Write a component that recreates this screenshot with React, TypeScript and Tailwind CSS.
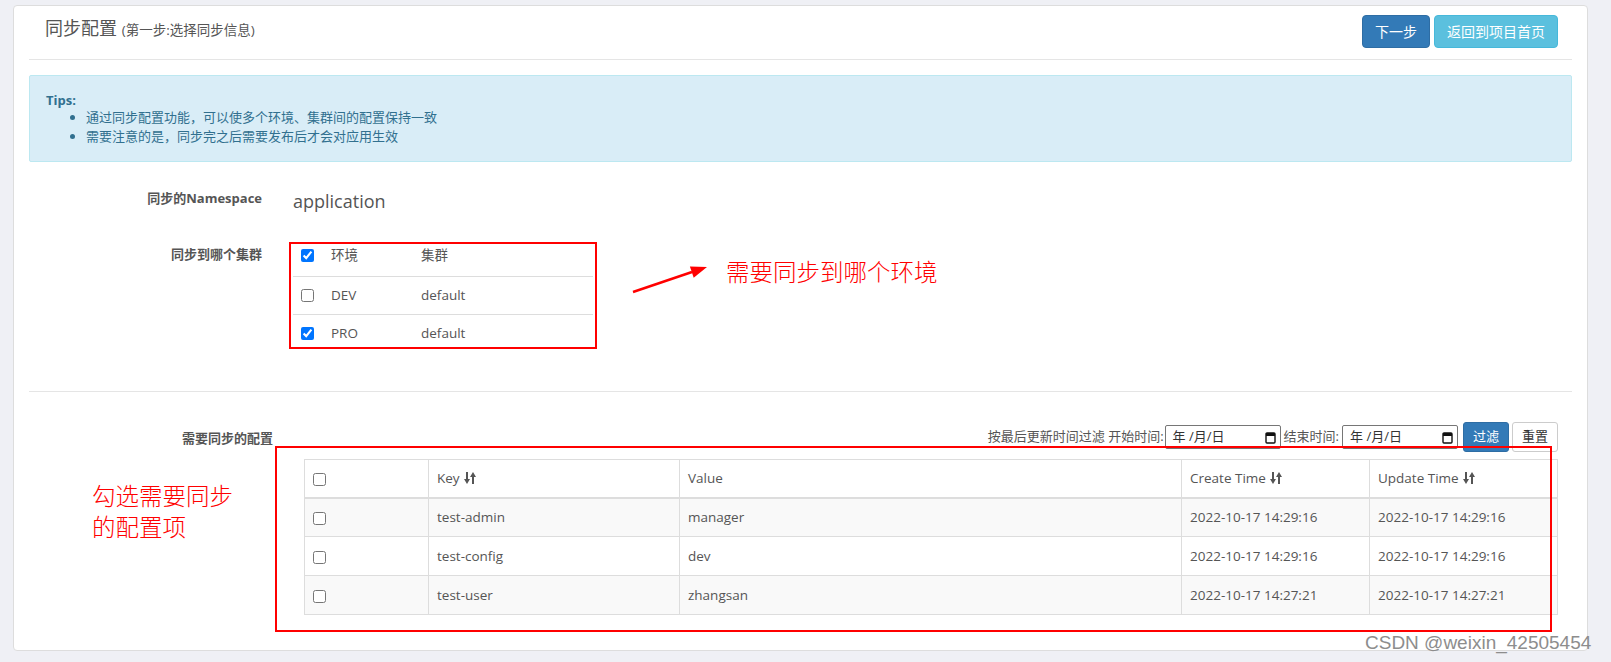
import React from 'react';

const SortIcon = () => (
  <svg width="12" height="14" viewBox="0 0 12 14" className="ml-[4px] inline-block align-[-2px]">
    <rect x="2" y="1" width="2" height="8" fill="#555" />
    <polygon points="0,8 6,8 3,13" fill="#555" />
    <rect x="8" y="5" width="2" height="8" fill="#555" />
    <polygon points="6,6 12,6 9,1" fill="#555" />
  </svg>
);

const CalendarIcon = () => (
  <svg width="11" height="13" viewBox="0 0 11 13">
    <rect x="1" y="2" width="9" height="10" rx="1" fill="none" stroke="#111" strokeWidth="1.4" />
    <rect x="1" y="2" width="9" height="3" fill="#111" />
  </svg>
);

const DateBox = () => (
  <div className="flex h-[24px] w-[116px] items-center justify-between rounded-[2px] border border-[#767676] bg-white pl-[7px] pr-[4px] text-[13px] text-[#333]">
    <span>年 /月/日</span>
    <CalendarIcon />
  </div>
);

const clusters = [
  { env: 'DEV', name: 'default', checked: false },
  { env: 'PRO', name: 'default', checked: true },
];

const items = [
  { key: 'test-admin', value: 'manager', created: '2022-10-17 14:29:16', updated: '2022-10-17 14:29:16' },
  { key: 'test-config', value: 'dev', created: '2022-10-17 14:29:16', updated: '2022-10-17 14:29:16' },
  { key: 'test-user', value: 'zhangsan', created: '2022-10-17 14:27:21', updated: '2022-10-17 14:27:21' },
];

export default function App() {
  return (
    <div className="relative h-[662px] w-full overflow-hidden bg-[#eff0f5] pt-[5px] pl-[13px] pr-[23px] font-['Open_Sans','Noto_Sans_CJK_SC',sans-serif] text-[#555]">
      <div className="rounded-[4px] border border-[#ddd] bg-white px-[15px] pb-[35px]">
        {/* heading */}
        <div className="flex items-center justify-between border-b border-[#e5e5e5] pt-[9px] pb-[11px] pl-[16px] pr-[14px]">
          <h3 className="mb-[6px] text-[18px] leading-[24px] text-[#555]">
            同步配置 <small className="text-[13.5px]">(第一步:选择同步信息)</small>
          </h3>
          <div className="flex gap-[4px]">
            <button className="h-[33px] rounded-[4px] border border-[#2e6da4] bg-[#337ab7] px-[12px] text-[14px] text-white">
              下一步
            </button>
            <button className="h-[33px] rounded-[4px] border border-[#46b8da] bg-[#5bc0de] px-[12px] text-[14px] text-white">
              返回到项目首页
            </button>
          </div>
        </div>

        {/* tips */}
        <div className="mt-[15px] rounded-[2px] border border-[#bce8f1] bg-[#d9edf7] pt-[16px] pb-[15px] pl-[16px] text-[13px] text-[#31708f]">
          <strong className="block leading-[16px]">Tips:</strong>
          <ul className="list-disc pl-[40px] leading-[19px]">
            <li>通过同步配置功能，可以使多个环境、集群间的配置保持一致</li>
            <li>需要注意的是，同步完之后需要发布后才会对应用生效</li>
          </ul>
        </div>

        {/* namespace */}
        <div className="mt-[26px] flex items-start">
          <div className="w-[233px] text-right text-[13px] font-bold leading-[20px]">同步的Namespace</div>
          <div className="ml-[31px] text-[18px] leading-[26px]">application</div>
        </div>

        {/* clusters */}
        <div className="mt-[28px] flex items-start">
          <div className="mt-[2px] w-[233px] text-right text-[13px] font-bold leading-[20px]">同步到哪个集群</div>
          <div className="ml-[27px] w-[308px] border-2 border-[#f00] px-[2px] text-[13.5px] leading-[20px]">
            <div className="flex h-[32px] items-start pt-[1px]">
              <div className="flex h-[20px] w-[38px] items-center pl-[8px]">
                <input type="checkbox" defaultChecked className="h-[13px] w-[13px]" />
              </div>
              <div className="w-[90px]">环境</div>
              <div>集群</div>
            </div>
            {clusters.map((c, i) => (
              <div
                key={c.env}
                className={`flex items-start border-t border-[#ddd] pt-[8px] ${i === 0 ? 'h-[38px]' : 'h-[33px]'}`}
              >
                <div className="flex h-[20px] w-[38px] items-center pl-[8px]">
                  <input type="checkbox" defaultChecked={c.checked} className="h-[13px] w-[13px]" />
                </div>
                <div className="w-[90px]">{c.env}</div>
                <div>{c.name}</div>
              </div>
            ))}
          </div>
          <svg width="84" height="35" viewBox="0 0 84 35" className="ml-[31px] mt-[20px]">
            <line x1="5" y1="30" x2="64" y2="10" stroke="#f00" strokeWidth="2.5" />
            <polygon points="79,5 65.7,15.8 61.9,4.4" fill="#f00" />
          </svg>
          <div className="ml-[14px] mt-[14px] font-['Noto_Sans_CJK_SC',sans-serif] text-[23.5px] font-light leading-[30px] text-[#f00]">
            需要同步到哪个环境
          </div>
        </div>

        {/* items */}
        <div className="relative mt-[42px] flex items-start border-t border-[#e5e5e5] pt-[30px]">
          <div className="mt-[6px] w-[244px] text-right text-[13px] font-bold leading-[20px]">需要同步的配置</div>
          <div className="ml-[31px] flex-1 pr-[14px]">
            <div className="flex h-[30px] items-center justify-end text-[13px]">
              <span>按最后更新时间过滤 开始时间:</span>
              <div className="ml-[1px]">
                <DateBox />
              </div>
              <span className="ml-[3px]">结束时间:</span>
              <div className="ml-[3px]">
                <DateBox />
              </div>
              <button className="ml-[5px] h-[30px] w-[46px] rounded-[3px] border border-[#2e6da4] bg-[#337ab7] text-[13px] text-white">
                过滤
              </button>
              <button className="ml-[3px] h-[30px] w-[46px] rounded-[3px] border border-[#ccc] bg-white text-[13px] text-[#333]">
                重置
              </button>
            </div>
            <table className="mt-[7px] w-full table-fixed border-collapse border border-[#ddd] text-[13.5px]">
              <colgroup>
                <col className="w-[124px]" />
                <col className="w-[251px]" />
                <col className="w-[502px]" />
                <col className="w-[188px]" />
                <col className="w-[188px]" />
              </colgroup>
              <thead>
                <tr className="h-[38px] border-b-2 border-[#ddd]">
                  <th className="border-r border-[#ddd] px-[8px] text-left font-normal">
                    <input type="checkbox" className="h-[13px] w-[13px] align-middle" />
                  </th>
                  <th className="border-r border-[#ddd] px-[8px] text-left font-normal">
                    Key<SortIcon />
                  </th>
                  <th className="border-r border-[#ddd] px-[8px] text-left font-normal">Value</th>
                  <th className="border-r border-[#ddd] px-[8px] text-left font-normal">
                    Create Time<SortIcon />
                  </th>
                  <th className="px-[8px] text-left font-normal">
                    Update Time<SortIcon />
                  </th>
                </tr>
              </thead>
              <tbody>
                {items.map((it, i) => (
                  <tr key={it.key} className={`h-[39px] border-t border-[#ddd] ${i % 2 === 0 ? 'bg-[#f9f9f9]' : 'bg-white'}`}>
                    <td className="border-r border-[#ddd] px-[8px]">
                      <input type="checkbox" className="h-[13px] w-[13px] align-middle" />
                    </td>
                    <td className="border-r border-[#ddd] px-[8px]">{it.key}</td>
                    <td className="border-r border-[#ddd] px-[8px]">{it.value}</td>
                    <td className="border-r border-[#ddd] px-[8px]">{it.created}</td>
                    <td className="px-[8px]">{it.updated}</td>
                  </tr>
                ))}
              </tbody>
            </table>
          </div>

          {/* annotations */}
          <div className="absolute left-[246px] top-[54px] h-[186px] w-[1277px] border-2 border-[#f00]" />
          <div className="absolute left-[63px] top-[88px] font-['Noto_Sans_CJK_SC',sans-serif] text-[23.5px] font-light leading-[31px] text-[#f00]">
            勾选需要同步
            <br />
            的配置项
          </div>
        </div>
      </div>

      <div className="absolute left-[1365px] top-[631px] font-['Liberation_Sans',sans-serif] text-[19px] leading-[24px] text-[#8d8d8d]">
        CSDN @weixin_42505454
      </div>
    </div>
  );
}
